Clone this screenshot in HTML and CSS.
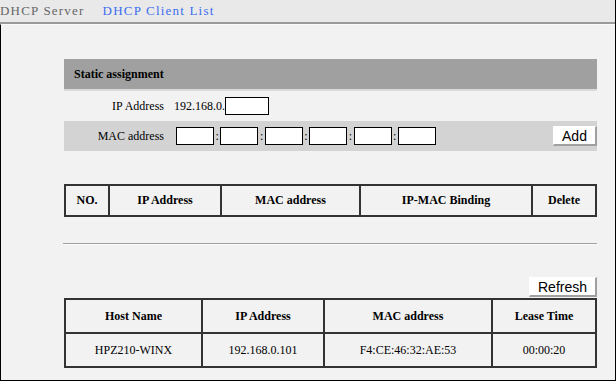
FILE: index.html
```html
<!DOCTYPE html>
<html lang="en">
<head>
    <meta charset="UTF-8">
    <title>DHCP Client List</title>
    <link rel="stylesheet" href="styles.css">
</head>
<body>
    <div class="page">
        <div class="tabs">
            <span class="tab">DHCP Server</span>
            <span class="tab active">DHCP Client List</span>
        </div>

        <div class="panel">
            <div class="static-box">
                <div class="box-title">Static assignment</div>
                <div class="form-row">
                    <label class="label">IP Address</label>
                    <span class="field">192.168.0.<input type="text" class="ip-input"></span>
                </div>
                <div class="form-row shaded">
                    <label class="label">MAC address</label>
                    <span class="field">
                        <input type="text" class="mac-input"><span class="colon">:</span><input type="text" class="mac-input"><span class="colon">:</span><input type="text" class="mac-input"><span class="colon">:</span><input type="text" class="mac-input"><span class="colon">:</span><input type="text" class="mac-input"><span class="colon">:</span><input type="text" class="mac-input">
                    </span>
                    <button class="btn">Add</button>
                </div>
            </div>

            <table class="grid bind-table">
                <tr>
                    <th class="c-no">NO.</th>
                    <th class="c-ip">IP Address</th>
                    <th class="c-mac">MAC address</th>
                    <th class="c-bind">IP-MAC Binding</th>
                    <th>Delete</th>
                </tr>
            </table>

            <hr class="sep">

            <div class="refresh-row">
                <button class="btn">Refresh</button>
            </div>

            <table class="grid client-table">
                <tr>
                    <th class="c-host">Host Name</th>
                    <th class="c-cip">IP Address</th>
                    <th class="c-cmac">MAC address</th>
                    <th>Lease Time</th>
                </tr>
                <tr>
                    <td>HPZ210-WINX</td>
                    <td>192.168.0.101</td>
                    <td>F4:CE:46:32:AE:53</td>
                    <td>00:00:20</td>
                </tr>
            </table>
        </div>
    </div>
</body>
</html>
```

FILE: styles.css
```css
body {
    margin: 0;
    font-family: "Liberation Serif", "Times New Roman", serif;
    font-size: 12px;
    color: #000;
    background: #f2f2f2;
}
.page {
    width: 615px;
    height: 381px;
    border-right: 1px solid #000;
    background: #f2f2f2;
    overflow: hidden;
}
.tabs {
    height: 22px;
    background: #e9e9e9;
    border-bottom: 2px solid #9a9a9a;
    display: flex;
    gap: 18px;
    align-items: center;
    font-size: 13px;
    letter-spacing: 1.2px;
}
.tab {
    color: #666;
}
.tab.active {
    color: #3b6ef0;
}
.panel {
    box-sizing: border-box;
    height: 357px;
    border-top: 1px solid #fafafa;
    border-left: 1px solid #000;
    border-bottom: 1px solid #000;
    padding: 34px 18px 0 63px;
}
.static-box {
    width: 533px;
}
.box-title {
    height: 30px;
    line-height: 30px;
    background: #a0a0a0;
    border-bottom: 2px solid #dadada;
    padding-left: 10px;
    font-weight: bold;
}
.form-row {
    height: 30px;
    display: flex;
    align-items: center;
}
.form-row.shaded {
    background: #d3d3d3;
}
.label {
    width: 100px;
    text-align: right;
    padding-right: 10px;
}
.field {
    display: flex;
    align-items: center;
}
input[type="text"] {
    height: 18px;
    box-sizing: border-box;
    border: 1px solid #000;
    background: #fff;
    padding: 0;
    margin: 0;
    flex-shrink: 0;
}
.ip-input {
    width: 44px;
    margin-left: 3px;
}
.mac-input {
    width: 38px;
}
.form-row.shaded .field {
    margin-left: 2px;
}
.colon {
    width: 6.4px;
    text-align: center;
}
.btn {
    font-family: "Liberation Sans", Arial, sans-serif;
    font-size: 14px;
    background: #fff;
    border: 1px solid #fff;
    border-right: 2px solid #a0a0a0;
    border-bottom: 2px solid #a0a0a0;
    height: 20px;
    padding: 0 6px;
    cursor: pointer;
    line-height: 16px;
}
.form-row .btn {
    margin-left: auto;
    width: 44px;
}
.grid {
    width: 533px;
    border-collapse: collapse;
    text-align: center;
}
.grid th, .grid td {
    border: 2px solid #333;
    height: 29px;
    padding: 0;
}
.bind-table {
    margin-top: 33px;
}
.c-no { width: 42px; }
.c-ip { width: 110px; }
.c-mac { width: 137px; }
.c-bind { width: 170px; }
.sep {
    width: 534px;
    margin: 26px 0 0 -1px;
    border: none;
    border-top: 1px solid #a0a0a0;
    border-bottom: 1px solid #fafafa;
    height: 0;
}
.refresh-row {
    width: 533px;
    display: flex;
    justify-content: flex-end;
    margin-top: 32px;
}
.refresh-row .btn {
    width: 68px;
}
.client-table {
    margin-top: 1px;
}
.client-table th, .client-table td {
    height: 32px;
}
.c-host { width: 135px; }
.c-cip { width: 120px; }
.c-cmac { width: 166px; }
```
